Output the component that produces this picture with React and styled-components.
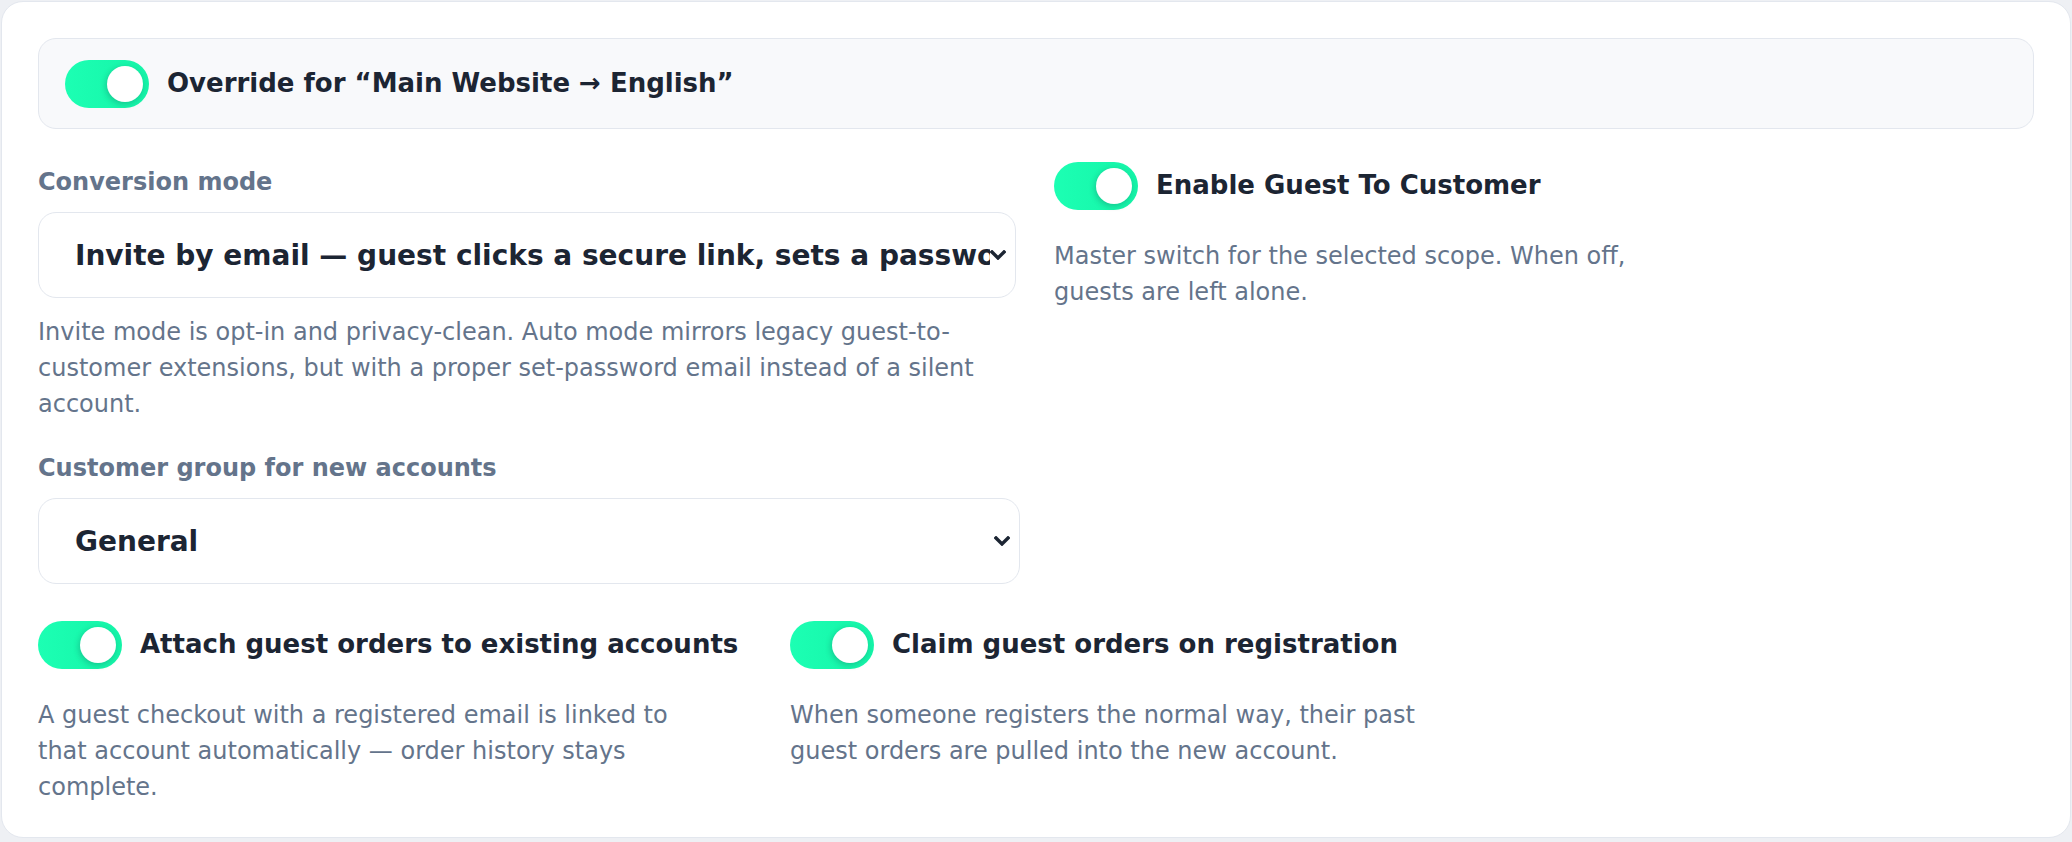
import React from 'react';
import styled, { createGlobalStyle } from 'styled-components';

const Global = createGlobalStyle`
  html, body {
    margin: 0;
    padding: 0;
    background: #eef0f4;
  }
  body {
    font-family: "DejaVu Sans", "Noto Sans", sans-serif;
  }
  * { box-sizing: border-box; }
`;

const Card = styled.div`
  margin: 1px;
  background: #ffffff;
  border: 1px solid #e3e7ee;
  border-radius: 22px;
  padding: 36px 36px 32px;
`;

const OverrideBar = styled.div`
  display: flex;
  align-items: center;
  gap: 18px;
  min-height: 91px;
  padding: 20px 26px;
  background: #f8f9fb;
  border: 1px solid #e3e7ee;
  border-radius: 18px;
`;

const Track = styled.div`
  position: relative;
  flex: 0 0 auto;
  width: 84px;
  height: 48px;
  border-radius: 24px;
  background: ${p => (p.$on ? 'linear-gradient(90deg, #1cffb3 0%, #15f4a8 100%)' : '#cbd5e1')};
`;

const Knob = styled.span`
  position: absolute;
  top: 6px;
  left: ${p => (p.$on ? '42px' : '6px')};
  width: 36px;
  height: 36px;
  border-radius: 50%;
  background: #ffffff;
  box-shadow: -1px 2px 6px rgba(15, 23, 42, 0.22);
`;

const Title = styled.span`
  font-size: 26px;
  font-weight: 700;
  color: #1c2533;
  line-height: 1.2;
  white-space: nowrap;
`;

const TopGrid = styled.div`
  display: grid;
  grid-template-columns: 1fr 1fr;
  column-gap: 36px;
  margin-top: 33px;
`;

const Column = styled.div`
  display: flex;
  flex-direction: column;
  min-width: 0;
`;

const Field = styled.div`
  display: flex;
  flex-direction: column;
  & + & {
    margin-top: 26px;
  }
`;

const Label = styled.div`
  font-size: 24px;
  font-weight: 700;
  line-height: 36px;
  color: #64748b;
  margin: 2px 0 12px;
`;

const SelectBox = styled.div`
  display: flex;
  align-items: center;
  height: 86px;
  padding: 0 9px 0 36px;
  border: 1px solid #e3e7ee;
  border-radius: 18px;
  background: #ffffff;
  margin-right: ${p => p.$extra || 0}px;
`;

const SelectText = styled.span`
  flex: 1;
  min-width: 0;
  overflow: hidden;
  white-space: nowrap;
  font-size: 28px;
  font-weight: 700;
  color: #1c2533;
`;

const Help = styled.p`
  margin: ${p => p.$top || 0}px 0 0;
  max-width: ${p => (p.$narrow ? '650px' : 'none')};
  font-size: 24px;
  line-height: 36px;
  color: #64748b;
`;

const SwitchRow = styled.div`
  display: flex;
  align-items: center;
  gap: 18px;
`;

const BottomRow = styled.div`
  display: grid;
  grid-template-columns: 716px 716px;
  column-gap: 36px;
  margin-top: 37px;
`;

function Toggle({ on = true }) {
  return (
    <Track $on={on}>
      <Knob $on={on} />
    </Track>
  );
}

function Chevron() {
  return (
    <svg width="16" height="10" viewBox="0 0 16 10" fill="none">
      <polyline points="2,2 8,8 14,2" stroke="#1c2533" strokeWidth="3.4" strokeLinecap="square" />
    </svg>
  );
}

function Select({ value, extra }) {
  return (
    <SelectBox $extra={extra}>
      <SelectText>{value}</SelectText>
      <Chevron />
    </SelectBox>
  );
}

export default function App() {
  return (
    <>
      <Global />
      <Card>
        <OverrideBar>
          <Toggle />
          <Title>Override for “Main Website → English”</Title>
        </OverrideBar>

        <TopGrid>
          <Column>
            <Field>
              <Label>Conversion mode</Label>
              <Select extra={2} value="Invite by email — guest clicks a secure link, sets a password, and is signed in" />
              <Help $top={16}>
                Invite mode is opt-in and privacy-clean. Auto mode mirrors legacy guest-to-customer extensions, but with a proper set-password email instead of a silent account.
              </Help>
            </Field>
            <Field>
              <Label>Customer group for new accounts</Label>
              <Select extra={-2} value="General" />
            </Field>
          </Column>
          <Column>
            <SwitchRow>
              <Toggle />
              <Title>Enable Guest To Customer</Title>
            </SwitchRow>
            <Help $narrow $top={28}>
              Master switch for the selected scope. When off, guests are left alone.
            </Help>
          </Column>
        </TopGrid>

        <BottomRow>
          <Column>
            <SwitchRow>
              <Toggle />
              <Title>Attach guest orders to existing accounts</Title>
            </SwitchRow>
            <Help $narrow $top={28}>
              A guest checkout with a registered email is linked to that account automatically — order history stays complete.
            </Help>
          </Column>
          <Column>
            <SwitchRow>
              <Toggle />
              <Title>Claim guest orders on registration</Title>
            </SwitchRow>
            <Help $narrow $top={28}>
              When someone registers the normal way, their past guest orders are pulled into the new account.
            </Help>
          </Column>
        </BottomRow>
      </Card>
    </>
  );
}
